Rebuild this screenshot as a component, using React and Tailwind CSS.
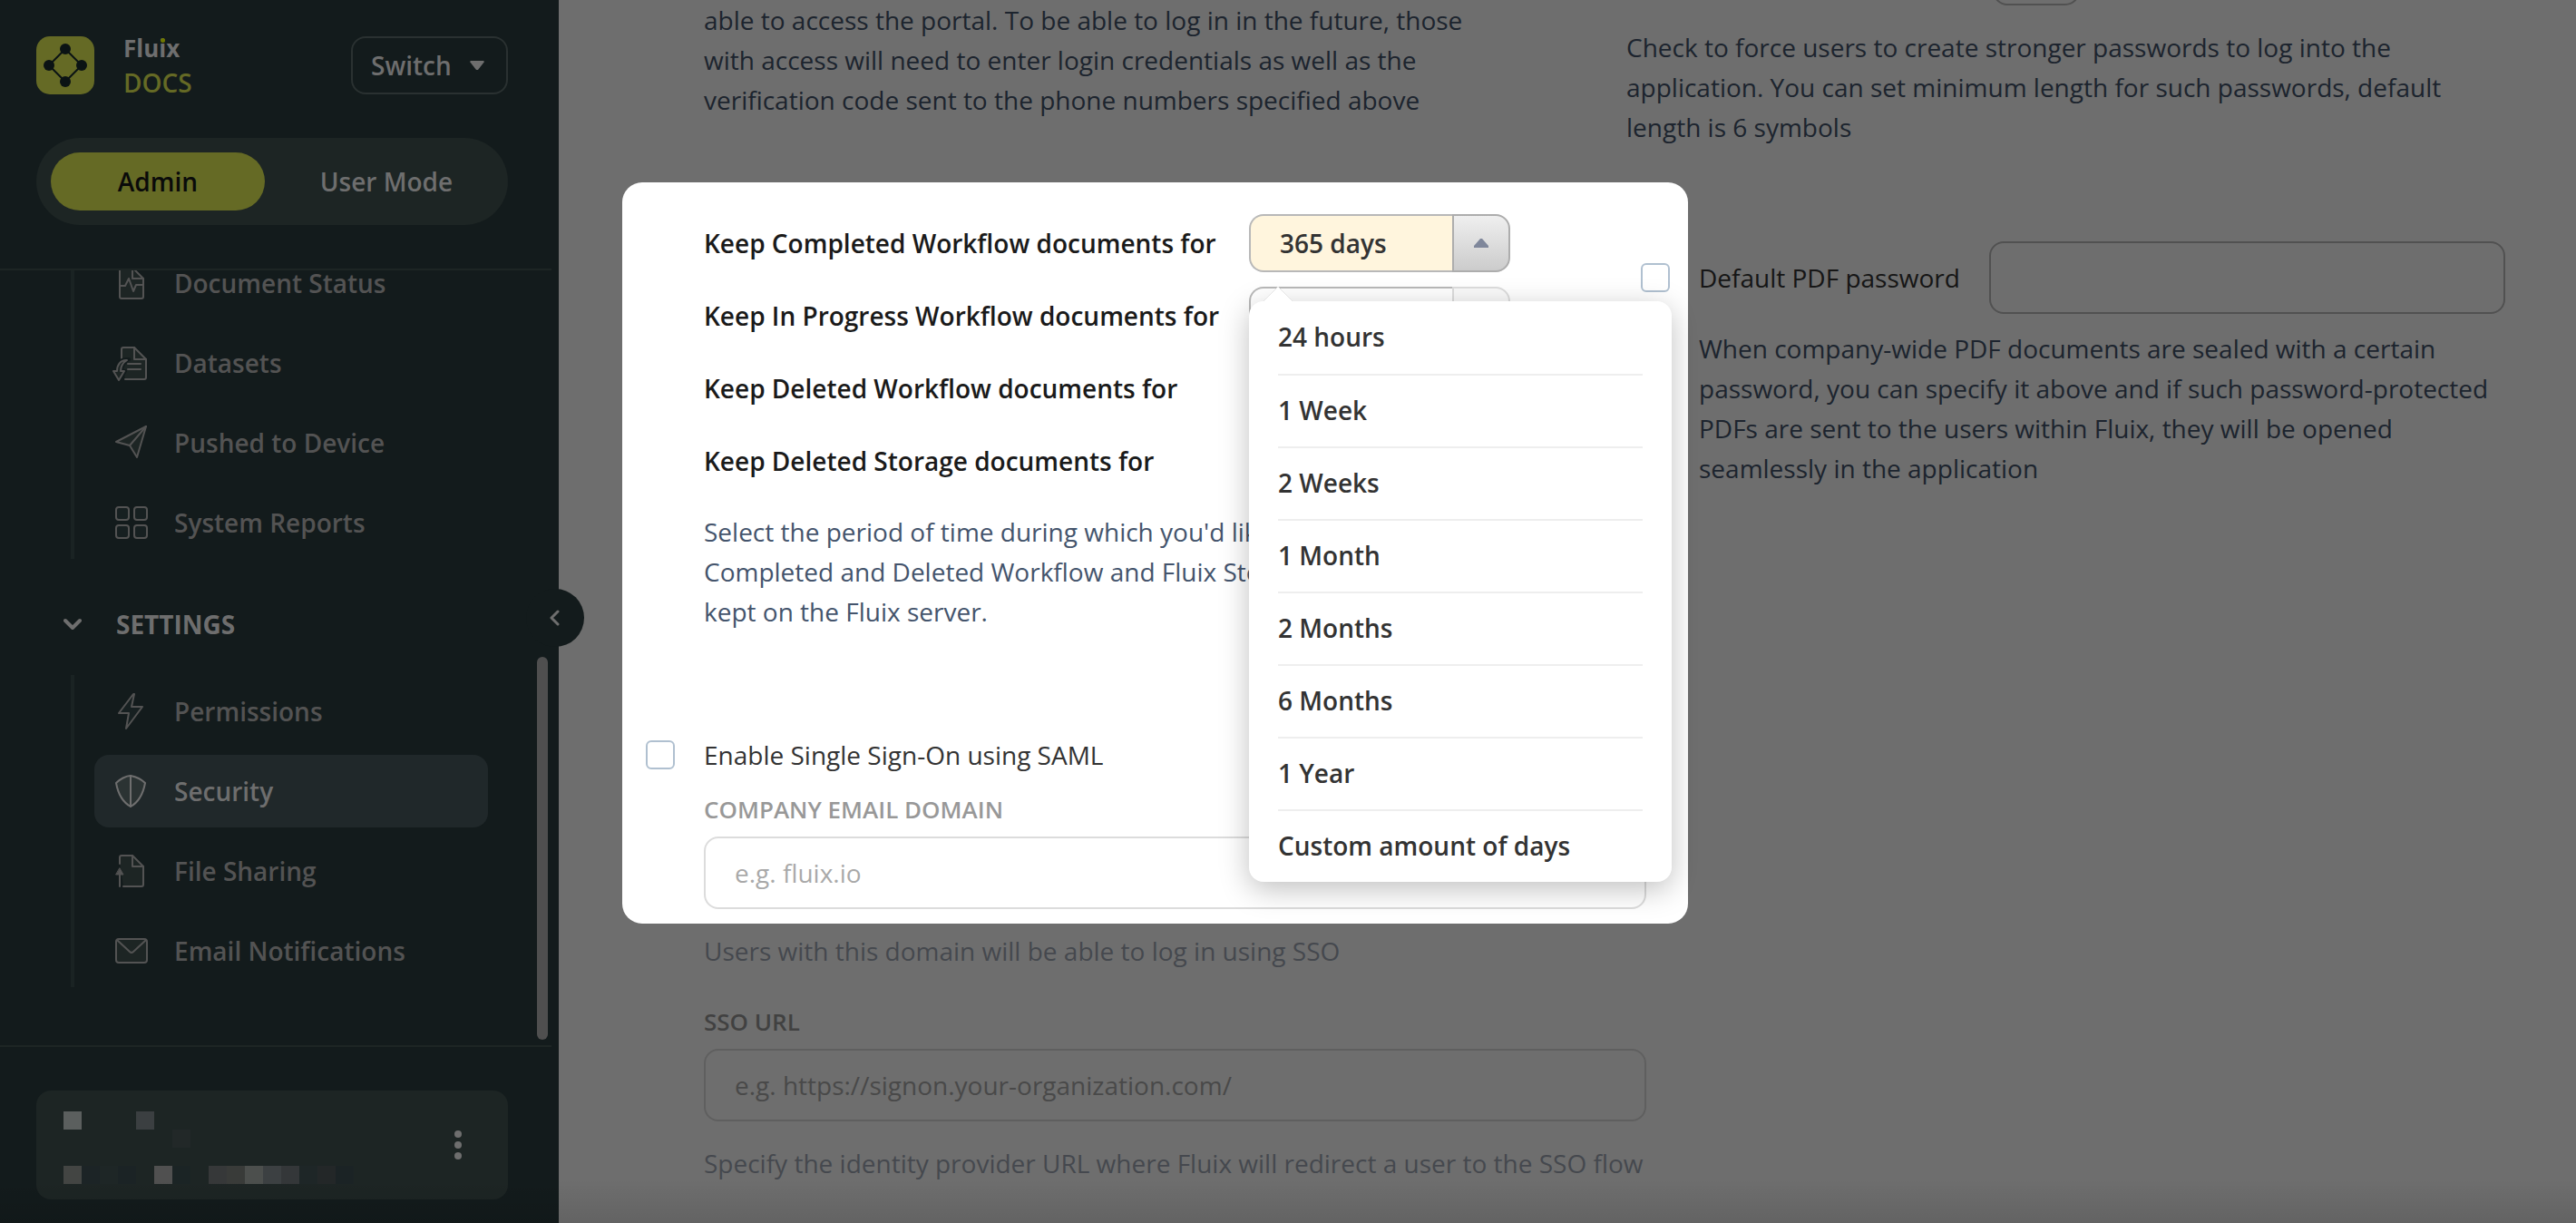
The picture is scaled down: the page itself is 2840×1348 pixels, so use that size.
import { useState } from "react";

const reportItems = [
  { id: "status", label: "Document Status", icon: StatusIcon },
  { id: "datasets", label: "Datasets", icon: DatasetsIcon },
  { id: "pushed", label: "Pushed to Device", icon: PushedIcon },
  { id: "reports", label: "System Reports", icon: ReportsIcon },
];

const settingsItems = [
  { id: "permissions", label: "Permissions", icon: PermissionsIcon },
  { id: "security", label: "Security", icon: SecurityIcon },
  { id: "sharing", label: "File Sharing", icon: SharingIcon },
  { id: "email", label: "Email Notifications", icon: EmailIcon },
];

const retentionRows = [
  { id: "completed", label: "Keep Completed Workflow documents for", value: "365 days" },
  { id: "progress", label: "Keep In Progress Workflow documents for", value: "" },
  { id: "deleted", label: "Keep Deleted Workflow documents for", value: "" },
  { id: "storage", label: "Keep Deleted Storage documents for", value: "" },
];

const periods = [
  "24 hours",
  "1 Week",
  "2 Weeks",
  "1 Month",
  "2 Months",
  "6 Months",
  "1 Year",
  "Custom amount of days",
];

// Blurred-out account name, one entry per block
const accountBlocks = [
  [0, 0, "#5b5f5e"],
  [80, 0, "#3b3f41"],
  [120, 20, "#222828"],
  [0, 60, "#434543"],
  [20, 60, "#1c2426"],
  [40, 60, "#1e2626"],
  [60, 60, "#1b2325"],
  [100, 60, "#505050"],
  [120, 60, "#1b2425"],
  [160, 60, "#363839"],
  [180, 60, "#393b39"],
  [200, 60, "#4c4f4d"],
  [220, 60, "#3c4042"],
  [240, 60, "#343739"],
  [260, 60, "#1e2627"],
  [280, 60, "#232728"],
  [300, 60, "#1b2325"],
];

function Icon({ children }) {
  return (
    <svg
      viewBox="0 0 40 40"
      className="w-10 h-10 shrink-0"
      fill="none"
      stroke="currentColor"
      strokeWidth="2"
      strokeLinejoin="round"
      strokeLinecap="round"
      aria-hidden="true"
    >
      {children}
    </svg>
  );
}

function StatusIcon() {
  return (
    <Icon>
      <path d="M10 3h12l12 12v20a2 2 0 0 1-2 2H10a2 2 0 0 1-2-2V5a2 2 0 0 1 2-2z" fill="#1d2524" />
      <path d="M22 3v12h12M8 23h6l4-8 5 14 3-7h8" />
    </Icon>
  );
}

function DatasetsIcon() {
  return (
    <Icon>
      <path d="M10 17V5a2 2 0 0 1 2-2h12l13 13v20a2 2 0 0 1-2 2H14" fill="#1d2524" />
      <path d="M24 3v13h13M17 21h14M17 27h14" />
      <path d="M16 16c-7 0-12 5-12 13H0l7 11 7-11h-4c0-6 2-10 8-13z" fill="#131b1c" stroke="#131b1c" strokeWidth="4" />
      <path d="M15 17c-6 0-10 5-10 12H1l6 10 6-10H9c0-5 2-9 7-12z" fill="#1d2524" />
    </Icon>
  );
}

function PushedIcon() {
  return (
    <Icon>
      <path d="M37 2 4 19l15 4 8 13z" fill="#1d2524" />
      <path d="M37 2 19 23" />
    </Icon>
  );
}

function ReportsIcon() {
  return (
    <Icon>
      <rect x="4" y="3" width="14" height="14" rx="3" fill="#172021" />
      <rect x="24" y="3" width="14" height="14" rx="3" fill="#172021" />
      <rect x="4" y="23" width="14" height="14" rx="3" fill="#172021" />
      <rect x="24" y="23" width="14" height="14" rx="3" fill="#172021" />
    </Icon>
  );
}

function PermissionsIcon() {
  return (
    <Icon>
      <path d="M23 1 7 22h11l-3 17 18-24H21l3-14z" fill="#172021" />
    </Icon>
  );
}

function SecurityIcon() {
  return (
    <Icon>
      <path d="M20 3c5 1 12 4 16 8-2 11-7 21-16 26C11 32 6 22 4 11 8 7 15 3 20 3z" fill="#2b3333" />
      <path d="M20 3v34" />
    </Icon>
  );
}

function SharingIcon() {
  return (
    <Icon>
      <path d="M8 12V5a2 2 0 0 1 2-2h12l12 12v20a2 2 0 0 1-2 2H12" fill="#1d2524" />
      <path d="M22 3v12h12M8 37V22" />
      <path d="M8 17l4 7H4z" fill="currentColor" strokeWidth="1" />
    </Icon>
  );
}

function EmailIcon() {
  return (
    <Icon>
      <rect x="4" y="7" width="34" height="26" rx="3" fill="#1d2524" />
      <path d="M5 8l14 13a3 3 0 0 0 4 0L37 8" />
    </Icon>
  );
}

function Logo() {
  return (
    <svg viewBox="0 0 64 64" className="w-16 h-16 shrink-0" aria-hidden="true">
      <rect width="64" height="64" rx="15" fill="#656a25" />
      <path d="M32 14 50 32 32 50 14 32z" fill="none" stroke="#0b1314" strokeWidth="2" />
      <circle cx="32" cy="14" r="6" fill="#0b1314" />
      <circle cx="50" cy="32" r="6" fill="#0b1314" />
      <circle cx="32" cy="50" r="6" fill="#0b1314" />
      <circle cx="14" cy="32" r="6" fill="#0b1314" />
    </svg>
  );
}

function NavList({ items, active, onSelect }) {
  return (
    <ul className="ml-[78px] mr-[78px] flex flex-col gap-2 border-l-4 border-[#1a2323] pl-[22px]">
      {items.map(({ id, label, icon: ItemIcon }) => (
        <li key={id}>
          <a
            href={`#${id}`}
            onClick={() => onSelect(id)}
            className={`flex h-20 items-center gap-7 rounded-2xl pl-5 font-semibold ${
              active === id ? "bg-[#20282a] text-[#6e6e6e]" : "text-[#535353]"
            }`}
          >
            <ItemIcon />
            <span>{label}</span>
          </a>
        </li>
      ))}
    </ul>
  );
}

function Sidebar() {
  const [mode, setMode] = useState("admin");
  const [active, setActive] = useState("security");

  return (
    <aside className="relative z-30 flex w-[616px] shrink-0 flex-col bg-[#131b1c]">
      <div className="mr-2 border-b-2 border-[#1d2524] pl-10 pr-12 pt-10 pb-12">
        <div className="flex h-16 items-center">
          <Logo />
          <div className="ml-8 flex flex-col">
            <div className="text-[26px] leading-[38px] font-bold text-[#6e6e6e]">
              Flu
              <span className="relative">
                i
                <span className="absolute left-[2px] top-[7px] h-[5px] w-[5px] rounded-full bg-[#6f7800]" />
              </span>
              x
            </div>
            <div className="text-[28px] leading-[38px] font-semibold text-[#656a25]">DOCS</div>
          </div>
          <button className="ml-auto flex h-16 w-[173px] items-center justify-between rounded-2xl border-2 border-[#2a3131] pl-5 pr-6 font-semibold text-[#6e6e6e]">
            Switch
            <svg viewBox="0 0 16 10" className="w-4 h-[10px]" aria-hidden="true">
              <path d="M1 0h14l1 1-7 9H7L0 1z" fill="#6e6e6e" />
            </svg>
          </button>
        </div>
        <div className="mt-12 flex h-24 rounded-full bg-[#1d2524] py-4 pl-4 font-semibold">
          <button
            onClick={() => setMode("admin")}
            className={`w-[236px] rounded-full ${mode === "admin" ? "bg-[#656a25] text-[#0a0a0a]" : "text-[#6e6e6e]"}`}
          >
            Admin
          </button>
          <button
            onClick={() => setMode("user")}
            className={`flex-1 rounded-full ${mode === "user" ? "bg-[#656a25] text-[#0a0a0a]" : "text-[#6e6e6e]"}`}
          >
            User Mode
          </button>
        </div>
      </div>

      <nav className="relative flex min-h-0 flex-1 flex-col justify-end overflow-hidden pb-16">
        <NavList items={reportItems} active={active} onSelect={setActive} />
        <button className="flex h-32 shrink-0 items-center gap-[38px] pl-[70px] pt-4 font-bold text-[#6e6e6e]">
          <svg viewBox="0 0 20 20" className="w-5 h-5" fill="none" stroke="currentColor" strokeWidth="4" strokeLinecap="round" strokeLinejoin="round" aria-hidden="true">
            <path d="M2 6l8 8 8-8" />
          </svg>
          SETTINGS
        </button>
        <NavList items={settingsItems} active={active} onSelect={setActive} />
        <div className="absolute right-3 bottom-[6px] h-[422px] w-3 rounded-full bg-[#4f4f4f]" />
      </nav>

      <div className="mr-2 border-t-2 border-[#1d2524] pl-10 pt-12 pb-[26px]">
        <div className="mr-12 flex h-[120px] items-center justify-between rounded-2xl bg-[#1d2524] pl-[30px] pr-[51px]">
          <svg viewBox="0 -6 320 86" className="w-80 h-[86px]" aria-hidden="true">
            {accountBlocks.map(([x, y, fill]) => (
              <rect key={`${x}-${y}`} x={x} y={y} width="20" height="20" fill={fill} />
            ))}
          </svg>
          <button aria-label="Account menu" className="flex flex-col gap-1">
            <span className="h-2 w-2 rounded-full bg-[#6e6e6e]" />
            <span className="h-2 w-2 rounded-full bg-[#6e6e6e]" />
            <span className="h-2 w-2 rounded-full bg-[#6e6e6e]" />
          </button>
        </div>
      </div>

      {/* Collapse handle sticks out of the sidebar */}
      <button
        aria-label="Collapse sidebar"
        className="absolute -right-7 top-[649px] flex h-16 w-16 items-center justify-center rounded-full bg-[#131b1c]"
      >
        <svg viewBox="0 0 12 18" className="w-3 h-[18px]" fill="none" stroke="#6e6e6e" strokeWidth="3" strokeLinecap="round" strokeLinejoin="round" aria-hidden="true">
          <path d="M9 2 2 9l7 7" />
        </svg>
      </button>
    </aside>
  );
}

function PeriodMenu({ onPick }) {
  return (
    <div className="absolute left-0 top-24 z-10 w-[466px] rounded-2xl bg-white shadow-[0_8px_32px_rgba(0,0,0,0.25)]">
      <svg viewBox="0 0 32 16" className="absolute -top-4 left-4 h-4 w-8" aria-hidden="true">
        <path d="M0 16 16 0l16 16" fill="#fff" stroke="#e5e5e5" />
      </svg>
      <ul className="px-8">
        {periods.map((p) => (
          <li key={p} className="h-20 border-[#eeeeee] not-first:border-t-2">
            <button onClick={() => onPick(p)} className="h-full w-full pb-[2px] text-left font-semibold text-[#333333]">
              {p}
            </button>
          </li>
        ))}
      </ul>
    </div>
  );
}

function RetentionRow({ id, label, value, open, onToggle, onPick }) {
  return (
    <div className="flex items-center">
      <label htmlFor={id} className="w-[601px] font-semibold text-[#1a1a1a]">
        {label}
      </label>
      <div className="relative flex h-16 w-72">
        <select
          id={id}
          value={value}
          onMouseDown={(e) => {
            e.preventDefault();
            onToggle();
          }}
          onChange={(e) => onPick(e.target.value)}
          className={`w-56 appearance-none rounded-l-2xl border-2 border-r-0 border-[#b8b8b8] pl-8 font-semibold text-[#333333] ${
            open ? "bg-[#fff5dd]" : "bg-white"
          }`}
        >
          {!periods.includes(value) && <option>{value}</option>}
          {periods.map((p) => (
            <option key={p}>{p}</option>
          ))}
        </select>
        <span
          className={`flex w-16 items-center justify-center rounded-r-2xl border-2 ${
            open ? "border-[#adadad] bg-linear-to-b from-[#efefef] to-[#cccccc]" : "border-[#dddddd] bg-[#fafafa]"
          }`}
        >
          <svg viewBox="0 0 16 10" className={`w-4 h-[10px] ${open ? "" : "rotate-180"}`} aria-hidden="true">
            <path d="M7 0h2l7 8v2H0V8z" fill="#7f879b" />
          </svg>
        </span>
        {open && <PeriodMenu onPick={onPick} />}
      </div>
    </div>
  );
}

const checkboxClass = "h-8 w-8 shrink-0 appearance-none rounded-md border-2 border-[#b0c0d0] bg-white checked:bg-[#b0c0d0]";
const inputClass = "h-20 rounded-2xl border-2 border-[#bbbbbb] bg-white px-8 text-[#333333] placeholder:text-[#555555]";

function SecuritySettings() {
  const [rows, setRows] = useState(retentionRows);
  const [openId, setOpenId] = useState("completed");

  const pick = (id, value) => {
    setRows(rows.map((r) => (r.id === id ? { ...r, value } : r)));
    setOpenId(null);
  };

  return (
    <main className="relative min-w-0 flex-1 overflow-hidden bg-white pl-24 pr-[78px] leading-[44px] text-[#44546c]">
      <div className="grid grid-cols-[1081fr_969fr]">
        <section className="-mr-[22px]">
          <p className="ml-16 max-w-[860px]">
            able to access the portal. To be able to log in in the future, those with access will need to enter
            login credentials as well as the verification code sent to the phone numbers specified above
          </p>

          <div className="relative ml-16 mt-[104px] flex flex-col gap-4">
            {rows.map((r) => (
              <RetentionRow
                key={r.id}
                {...r}
                open={openId === r.id}
                onToggle={() => setOpenId(openId === r.id ? null : r.id)}
                onPick={(v) => pick(r.id, v)}
              />
            ))}
          </div>
          <p className="ml-16 mt-6">
            Select the period of time during which you'd like
            <br />
            Completed and Deleted Workflow and Fluix Storage
            <br />
            kept on the Fluix server.
          </p>

          <div className="mt-[116px] flex h-10 items-center gap-8">
            <input id="sso" type="checkbox" className={checkboxClass} />
            <label htmlFor="sso" className="text-[#333333]">Enable Single Sign-On using SAML</label>
          </div>

          <div className="ml-16 mt-5 flex flex-col opacity-50">
            <label htmlFor="domain" className="mb-[10px] text-[26px] leading-10 font-semibold text-[#333333]">
              COMPANY EMAIL DOMAIN
            </label>
            <input id="domain" type="text" placeholder="e.g. fluix.io" className={inputClass} />
            <p className="mt-6">Users with this domain will be able to log in using SSO</p>
            <label htmlFor="ssoUrl" className="mb-[10px] mt-9 text-[26px] leading-10 font-semibold text-[#333333]">
              SSO URL
            </label>
            <input
              id="ssoUrl"
              type="text"
              placeholder="e.g. https://signon.your-organization.com/"
              className={inputClass}
            />
            <p className="mt-6">Specify the identity provider URL where Fluix will redirect a user to the SSO flow</p>
          </div>
        </section>

        <section>
          <input
            type="text"
            aria-label="Minimum password length"
            className="-mt-[58px] ml-[404px] block h-16 w-24 rounded-2xl border-2 border-[#bbbbbb] bg-white"
          />
          <p className="mt-6">
            Check to force users to create stronger passwords to log into the application. You can set minimum
            length for such passwords, default length is 6 symbols
          </p>

          <div className="ml-4 mt-[104px] flex h-20 items-center">
            <input id="pdf" type="checkbox" className={checkboxClass} />
            <label htmlFor="pdf" className="ml-8 w-[320px] text-[#333333]">Default PDF password</label>
            <input type="text" aria-label="PDF password" className={`${inputClass} min-w-0 flex-1`} />
          </div>
          <p className="ml-20 mt-4">
            When company-wide PDF documents are sealed with a certain password, you can specify it above and if
            such password-protected PDFs are sent to the users within Fluix, they will be opened seamlessly in the
            application
          </p>
        </section>
      </div>

      {/* Dimmed backdrop with a spotlight over the retention block */}
      <div className="pointer-events-none absolute left-[70px] top-[201px] z-20 h-[817px] w-[1175px] rounded-[22px] shadow-[0_0_0_3000px_rgba(0,0,0,0.57)]" />
    </main>
  );
}

export default function App() {
  return (
    <div className="relative flex h-screen overflow-hidden font-['Open_Sans','Noto_Sans',sans-serif] text-[28px]">
      <Sidebar />
      <SecuritySettings />
      <div className="pointer-events-none absolute inset-x-0 bottom-0 z-40 h-12 bg-linear-to-b from-transparent to-black/10" />
    </div>
  );
}
